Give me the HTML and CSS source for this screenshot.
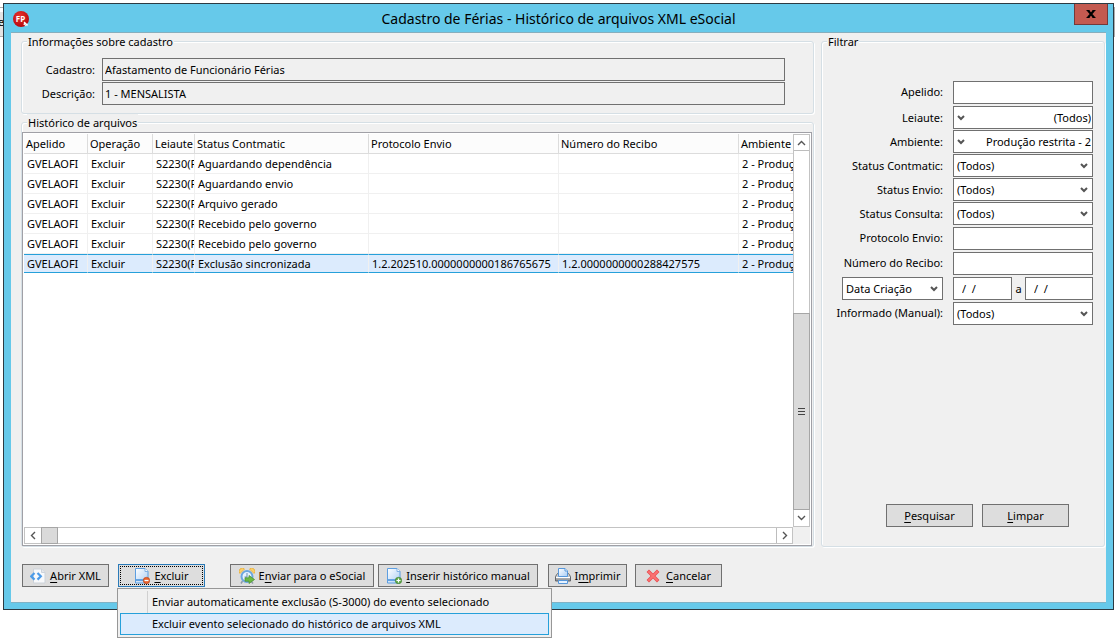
FILE: index.html
```html
<!DOCTYPE html>
<html lang="pt-BR">
<head>
<meta charset="utf-8">
<title>Cadastro de Férias - Histórico de arquivos XML eSocial</title>
<link rel="stylesheet" href="styles.css">
</head>
<body>
<svg class="defs" width="0" height="0" aria-hidden="true">
  <defs>
    <linearGradient id="paper" x1="0" y1="0" x2="1" y2="1"><stop offset="0" stop-color="#fff"/><stop offset="1" stop-color="#a9cdf5"/></linearGradient>
    <linearGradient id="metal" x1="0" y1="0" x2="0" y2="1"><stop offset="0" stop-color="#eee"/><stop offset="1" stop-color="#85888c"/></linearGradient>
    <radialGradient id="red" cx=".4" cy=".3" r=".8"><stop offset="0" stop-color="#e8332c"/><stop offset="1" stop-color="#b00008"/></radialGradient>
    <symbol id="chevron" viewBox="0 0 8 6"><path d="M1 1l3 3 3-3" fill="none" stroke="#555" stroke-width="2"/></symbol>
    <symbol id="page" viewBox="0 0 16 16">
      <path d="M1.500 .5h9.500l3 3v11.500h-12.500z" fill="url(#paper)" stroke="#5d9ee0"/>
      <path d="M11 .5v3h3" fill="#fff" stroke="#7fb0e4"/>
      <path d="M2 12h10" stroke="#4a94dc" stroke-width="1.600"/>
    </symbol>
  </defs>
</svg>
<div class="backdrop" aria-hidden="true">e</div>
<main class="window">
  <header class="titlebar">
    <svg class="app-icon" width="17" height="17" viewBox="0 0 17 17">
      <circle cx="8" cy="8" r="8" fill="url(#red)"/>
      <text x="7.500" y="10.500" text-anchor="middle" class="app-letters">FP</text>
      <path d="M11 11l3.500 3.500M11 14l1-3M12 14.500l2.500-1.500" stroke="#fff" stroke-width="1.300" fill="none"/>
    </svg>
    <h1 class="title">Cadastro de Férias - Histórico de arquivos XML eSocial</h1>
    <button class="close" type="button" aria-label="Fechar"><svg width="10" height="8" viewBox="0 0 10 8"><path d="M2 .5l6 7M8 .5l-6 7" stroke="#000" stroke-width="2.200"/><path d="M.5 .5h3M6.500 .5h3M.5 7.500h3M6.500 7.500h3" stroke="#000"/></svg></button>
  </header>
  <div class="client">
    <div class="panels">
      <div class="left">
        <fieldset class="group info">
          <legend>Informações sobre cadastro</legend>
          <label class="info-label" for="cadastro">Cadastro:</label>
          <input class="box readonly" id="cadastro" value="Afastamento de Funcionário Férias" readonly>
          <label class="info-label" for="descricao">Descrição:</label>
          <input class="box readonly" id="descricao" value="1 - MENSALISTA" readonly>
        </fieldset>
        <fieldset class="group history">
          <legend>Histórico de arquivos</legend>
          <div class="grid">
            <div class="rows">
              <table class="files">
                <colgroup><col class="c1"><col class="c2"><col class="c3"><col class="c4"><col class="c5"><col class="c6"><col></colgroup>
                <thead><tr><th>Apelido</th><th>Operação</th><th>Leiaute</th><th>Status Contmatic</th><th>Protocolo Envio</th><th>Número do Recibo</th><th>Ambiente</th></tr></thead>
                <tbody>
                  <tr><td>GVELAOFI</td><td>Excluir</td><td>S2230(F</td><td>Aguardando dependência</td><td></td><td></td><td>2 - Produç</td></tr>
                  <tr><td>GVELAOFI</td><td>Excluir</td><td>S2230(F</td><td>Aguardando envio</td><td></td><td></td><td>2 - Produç</td></tr>
                  <tr><td>GVELAOFI</td><td>Excluir</td><td>S2230(F</td><td>Arquivo gerado</td><td></td><td></td><td>2 - Produç</td></tr>
                  <tr><td>GVELAOFI</td><td>Excluir</td><td>S2230(F</td><td>Recebido pelo governo</td><td></td><td></td><td>2 - Produç</td></tr>
                  <tr><td>GVELAOFI</td><td>Excluir</td><td>S2230(F</td><td>Recebido pelo governo</td><td></td><td></td><td>2 - Produç</td></tr>
                  <tr class="selected"><td>GVELAOFI</td><td>Excluir</td><td>S2230(F</td><td>Exclusão sincronizada</td><td>1.2.202510.0000000000186765675</td><td>1.2.0000000000288427575</td><td>2 - Produç</td></tr>
                </tbody>
              </table>
            </div>
            <div class="vscroll">
              <button class="arrow" type="button" aria-label="Rolar para cima"><svg width="9" height="6" viewBox="0 0 9 6"><path d="M1 5l3.500-3.500 3.500 3.500" fill="none" stroke="#555" stroke-width="1.400"/></svg></button>
              <div class="v-space"></div>
              <div class="v-thumb"><svg width="7" height="8" viewBox="0 0 7 8"><path d="M0 .5h7M0 3.500h7M0 6.500h7" stroke="#444"/></svg></div>
              <button class="arrow" type="button" aria-label="Rolar para baixo"><svg width="9" height="6" viewBox="0 0 9 6"><path d="M1 1l3.500 3.500 3.500-3.500" fill="none" stroke="#555" stroke-width="1.400"/></svg></button>
            </div>
            <div class="hscroll">
              <button class="arrow" type="button" aria-label="Rolar para a esquerda"><svg width="6" height="9" viewBox="0 0 6 9"><path d="M5 1l-3.500 3.500 3.500 3.500" fill="none" stroke="#555" stroke-width="1.400"/></svg></button>
              <div class="h-thumb"></div>
              <div class="h-space"></div>
              <button class="arrow" type="button" aria-label="Rolar para a direita"><svg width="6" height="9" viewBox="0 0 6 9"><path d="M1 1l3.500 3.500-3.500 3.500" fill="none" stroke="#555" stroke-width="1.400"/></svg></button>
            </div>
            <div class="corner"></div>
          </div>
        </fieldset>
      </div>
      <fieldset class="group filter">
        <legend>Filtrar</legend>
        <div class="field tall first"><label for="apelido">Apelido:</label><input class="box" id="apelido"></div>
        <div class="field"><label for="leiaute">Leiaute:</label><span class="combo mirrored"><select class="box" id="leiaute"><option>(Todos)</option></select><svg class="mark" width="8" height="6"><use href="#chevron"/></svg></span></div>
        <div class="field"><label for="ambiente">Ambiente:</label><span class="combo mirrored"><select class="box" id="ambiente"><option>Produção restrita - 2</option></select><svg class="mark" width="8" height="6"><use href="#chevron"/></svg></span></div>
        <div class="field"><label for="contmatic">Status Contmatic:</label><span class="combo"><select class="box" id="contmatic"><option>(Todos)</option></select><svg class="mark" width="8" height="6"><use href="#chevron"/></svg></span></div>
        <div class="field"><label for="envio">Status Envio:</label><span class="combo"><select class="box" id="envio"><option>(Todos)</option></select><svg class="mark" width="8" height="6"><use href="#chevron"/></svg></span></div>
        <div class="field"><label for="consulta">Status Consulta:</label><span class="combo"><select class="box" id="consulta"><option>(Todos)</option></select><svg class="mark" width="8" height="6"><use href="#chevron"/></svg></span></div>
        <div class="field tall"><label for="protocolo">Protocolo Envio:</label><input class="box" id="protocolo"></div>
        <div class="field tall"><label for="recibo">Número do Recibo:</label><input class="box" id="recibo"></div>
        <div class="field tall">
          <span class="combo date-kind"><select class="box" aria-label="Tipo de data"><option>Data Criação</option></select><svg class="mark" width="8" height="6"><use href="#chevron"/></svg></span>
          <span class="period"><input class="box date from" id="de" aria-label="Data inicial" value="/  /"><label for="ate">a</label><input class="box date to" id="ate" value="/  /"></span>
        </div>
        <div class="field tall"><label for="informado">Informado (Manual):</label><span class="combo"><select class="box" id="informado"><option>(Todos)</option></select><svg class="mark" width="8" height="6"><use href="#chevron"/></svg></span></div>
        <div class="filter-actions">
          <button class="btn" type="button"><span><u>P</u>esquisar</span></button>
          <button class="btn" type="button"><span><u>L</u>impar</span></button>
        </div>
      </fieldset>
    </div>
    <footer class="toolbar">
      <button class="btn" type="button">
        <svg width="16" height="16" viewBox="0 0 16 16"><path d="M3.500 1h8l3.500 3.500v10.500h-11.500z" fill="#f8f9fb" stroke="#cdd3da"/><path d="M11.500 1v3.500h3.500" fill="#e3e7ec" stroke="#cdd3da"/><path d="M4.500 5l-3.300 3.300 3.300 3.300M7.500 5l3.300 3.300-3.300 3.300" fill="none" stroke="#4c9be8" stroke-width="2.200"/></svg>
        <span><u>A</u>brir XML</span></button>
      <div class="menu-anchor">
        <button class="btn focused" type="button" aria-haspopup="menu" aria-expanded="true">
          <svg width="16" height="16" viewBox="0 0 16 16"><use href="#page" width="16" height="16"/><circle cx="12.500" cy="12.500" r="3.200" fill="#e9622d" stroke="#b83f12" stroke-width=".6"/><path d="M10.500 12.500h4" stroke="#fff" stroke-width="1.300"/></svg>
          <span><u>E</u>xcluir</span></button>
        <div class="menu" role="menu">
          <button class="item" type="button" role="menuitem">Enviar automaticamente exclusão (S-3000) do evento selecionado</button>
          <button class="item active" type="button" role="menuitem">Excluir evento selecionado do histórico de arquivos XML</button>
        </div>
      </div>
      <button class="btn send" type="button">
        <svg width="16" height="16" viewBox="0 0 16 16"><path d="M1 5.500a3 3 0 0 1 4.500-4.500zM15 5.500a3 3 0 0 0-4.500-4.500z" fill="#fbd06a" stroke="#e5ac3a" stroke-width=".8"/><path d="M3.500 13l-1.500 2.500M12 13l2 2.500" stroke="#8d9bab" stroke-width="1.500"/><circle cx="8" cy="8.500" r="5.500" fill="#e6f2ff" stroke="#6ba6de" stroke-width="2"/><path d="M8 5v4h-2.500" fill="none" stroke="#6d8fb2"/><path d="M6 9.800h4v-2.300l5.500 4-5.500 4v-2.300h-4z" fill="#6cbb45" stroke="#4c9233" stroke-width=".8"/></svg>
        <span>E<u>n</u>viar para o eSocial</span></button>
      <button class="btn insert" type="button">
        <svg width="16" height="16" viewBox="0 0 16 16"><use href="#page" width="16" height="16"/><circle cx="12.500" cy="12.500" r="3.200" fill="#62ac4b" stroke="#39792a" stroke-width=".6"/><path d="M10.500 12.500h4M12.500 10.500v4" stroke="#fff" stroke-width="1.200"/></svg>
        <span><u>I</u>nserir histórico manual</span></button>
      <button class="btn print" type="button">
        <svg width="16" height="16" viewBox="0 0 16 16"><path d="M2.500 5.500h11l2 3v4.500h-15v-4.500z" fill="url(#metal)" stroke="#63666a"/><path d="M3.500 .5h6.500l2.500 2.500v5.500h-9z" fill="url(#paper)" stroke="#5797da"/><path d="M10 .5v2.500h2.500" fill="#fff" stroke="#5797da"/><path d="M1 9.500h14" stroke="#fff"/><path d="M3.500 12.500h9v3h-9z" fill="#e6f2ff" stroke="#5797da"/></svg>
        <span>I<u>m</u>primir</span></button>
      <button class="btn cancel" type="button">
        <svg width="14" height="14" viewBox="0 0 14 14"><path d="M3 3l8 8M11 3l-8 8" stroke="#ea4a4d" stroke-width="3.400" stroke-linecap="square"/><path d="M3 3l8 8M11 3l-8 8" stroke="#fa7272" stroke-width="2" stroke-linecap="square"/></svg>
        <span><u>C</u>ancelar</span></button>
    </footer>
  </div>
</main>
</body>
</html>
```
FILE: styles.css
```css
* { box-sizing: border-box; }
body {
  margin: 0;
  height: 100vh;
  padding: 3px 1px 28px 3px;
  display: flex;
  background: #fff;
  color: #000;
  font: 11px/16px "Noto Sans", "Open Sans", sans-serif;
}
input, select, button { font: inherit; color: inherit; border-radius: 0; margin: 0; }
.defs { position: absolute; }
.backdrop {
  position: absolute;
  z-index: -1;
  top: 7px;
  left: -3px;
  right: 0;
  height: 30px;
  border: 1px solid #adadad;
  background: #e3e3e3;
  box-shadow: inset 0 4px #fff;
  line-height: 28px;
}
.window {
  flex: 1;
  min-width: 0;
  display: flex;
  flex-direction: column;
  border: 1px solid #2c3a42;
  background: #66c9ea;
  padding: 0 7px 7px;
}
.titlebar {
  display: grid;
  grid-template-columns: 36px 1fr 36px;
  height: 29px;
  align-items: center;
  margin: 0 -2px;
}
.app-icon { margin: 1px 0 0 4px; }
.app-letters { font: bold 8px "Open Sans", sans-serif; fill: #fff; }
.title { margin: 0; text-align: center; font-size: 14px; font-weight: 400; line-height: 20px; }
.close {
  align-self: start;
  justify-self: end;
  width: 34px;
  height: 21px;
  padding: 0;
  border: 1px solid #73393a;
  border-top: 0;
  background: #c35a50;
  display: flex;
  align-items: center;
  justify-content: center;
}
.client {
  flex: 1;
  min-height: 0;
  display: flex;
  flex-direction: column;
  background: #f0f0f0;
  box-shadow: 0 -1px #86aebd, 0 1px #7fb2c5;
}
.panels {
  flex: 1;
  min-height: 0;
  display: grid;
  grid-template-columns: minmax(0, 1fr) 284px;
  gap: 7px;
  padding: 0 1px 0 10px;
}
.left { display: flex; flex-direction: column; min-height: 0; }
.group {
  min-width: 0;
  margin: 0;
  border: 1px solid #d5dfe5;
  border-radius: 3px;
  box-shadow: inset 1px 1px #fff, 1px 1px #fff;
}
.group legend { height: 17px; padding: 0 1px; margin-left: 5px; background: #f0f0f0; line-height: 18px; }
.info {
  display: grid;
  grid-template-columns: 73px 1fr;
  column-gap: 7px;
  row-gap: 1px;
  align-items: center;
  padding: 8px 28px 8px 0;
}
.info-label { text-align: right; }
.box {
  width: 100%;
  height: 23px;
  border: 1px solid #707070;
  background: #fff;
  padding: 0 3px;
  outline: 0;
  appearance: none;
}
.readonly { background: #f0f0f0; padding: 0 2px 1px; }
.history { flex: 1; min-height: 0; padding: 0; display: flex; }
.grid {
  flex: 1;
  min-width: 0;
  display: grid;
  grid-template: minmax(0, 1fr) 17px / minmax(0, 1fr) 17px;
  border: 1px solid #a0a0a6;
  background: #fff;
  margin: 1px 1px 0 0;
  padding: 1px;
}
.rows { overflow: hidden; }
.files { width: 100%; table-layout: fixed; border-collapse: separate; border-spacing: 0; }
.c1 { width: 64px; }
.c2 { width: 65px; }
.c3 { width: 42px; }
.c4 { width: 174px; }
.c5 { width: 190px; }
.c6 { width: 180px; }
.files th, .files td {
  height: 20px;
  padding: 0 0 0 3px;
  border-right: 1px solid #f0f0f0;
  border-bottom: 1px solid #f0f0f0;
  font-weight: 400;
  text-align: left;
  line-height: 18px;
  white-space: nowrap;
  overflow: hidden;
}
.files th { background: #fcfcfc; border-color: #dcdcdc; padding-left: 2px; }
.files th:last-child, .files td:last-child { border-right: 0; }
.files .selected td {
  height: 19px;
  line-height: 17px;
  background: #dcebfd;
  border-top: 1px solid #26a0da;
  border-bottom-color: #26a0da;
}
.vscroll { display: flex; flex-direction: column; border: 1px solid #c3c3c3; }
.arrow {
  flex: 0 0 16px;
  padding: 0;
  border: 0 solid #bdbdbd;
  background: #fff;
  display: flex;
  align-items: center;
  justify-content: center;
}
.vscroll .arrow:first-child { border-bottom-width: 1px; }
.v-space { flex: 163; }
.v-thumb {
  flex: 196;
  margin: 0 -1px;
  border: 1px solid #a6a6a6;
  background: #dadada;
  display: flex;
  align-items: center;
  justify-content: center;
}
.hscroll { display: flex; border: 1px solid #c3c3c3; }
.hscroll .arrow:last-child { border-left-width: 1px; }
.h-thumb { flex: 0 0 17px; margin: -1px 0; border: 1px solid #a6a6a6; background: #dadada; }
.h-space { flex: 1; }
.corner { background: #f0f0f0; }
.filter { display: flex; flex-direction: column; gap: 1px; padding: 30px 11px 19px 0; }
.field {
  display: grid;
  grid-template-columns: 1fr 140px;
  column-gap: 10px;
  align-items: end;
}
.field label { text-align: right; align-self: center; }
.tall { height: 24px; }
.first { margin-bottom: 1px; }
.combo { position: relative; display: flex; }
.mark { position: absolute; right: 5px; top: 9px; pointer-events: none; }
.mirrored .box { text-align-last: right; padding: 0 1px; }
.mirrored .mark { right: auto; left: 4px; }
.date-kind { justify-self: end; width: 101px; }
.period { display: flex; justify-content: space-between; }
.date { padding-left: 8px; white-space: pre; }
.from { width: 59px; }
.to { width: 68px; }
.filter-actions { margin-top: auto; padding-right: 24px; display: flex; justify-content: flex-end; gap: 9px; }
.btn {
  height: 23px;
  min-width: 87px;
  padding: 0 5px;
  border: 1px solid #707070;
  background: #ddd;
  display: flex;
  align-items: center;
  justify-content: center;
  gap: 4px;
  white-space: nowrap;
}
.btn u, .btn span { text-underline-offset: 2px; }
.toolbar { display: flex; padding: 17px 11px 15px; }
.menu-anchor { position: relative; margin: 0 25px 0 9px; }
.focused { border-color: #2a7ab8; outline: 1px dotted #000; outline-offset: -3px; }
.send { width: 144px; }
.insert { width: 160px; margin-left: 4px; }
.print { min-width: 79px; margin-left: 10px; }
.cancel { margin-left: 8px; gap: 6px; }
.menu {
  position: absolute;
  z-index: 1;
  top: 24px;
  left: -1px;
  width: 435px;
  padding: 2px;
  border: 1px solid #979797;
  background: linear-gradient(90deg, #f0f0f0 27px, #d0d0d0 27px, #d0d0d0 28px, #f0f0f0 28px) content-box, #f0f0f0;
}
.item {
  display: block;
  width: 100%;
  height: 22px;
  padding: 0 0 0 31px;
  border: 1px solid transparent;
  background: none;
  text-align: left;
  white-space: nowrap;
}
.active { background: #dcebfd; border-color: #26a0da; }
```
